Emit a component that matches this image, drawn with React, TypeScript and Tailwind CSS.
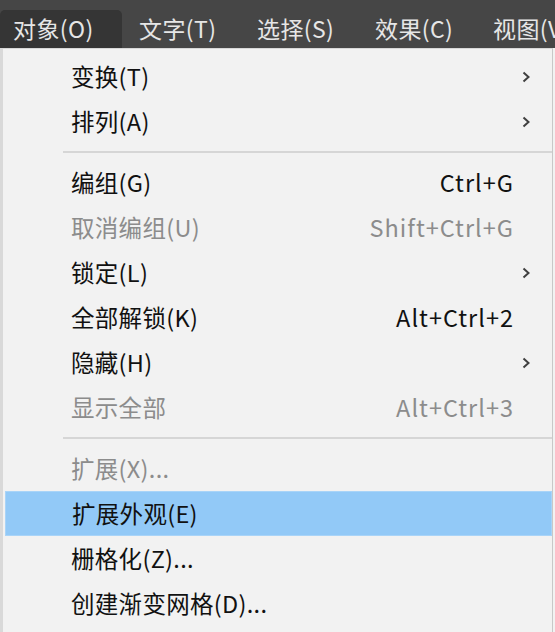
import React from 'react';

type Item =
  | { type: 'sep' }
  | { type: 'item'; label: string; shortcut?: string; sub?: boolean; disabled?: boolean; active?: boolean };

const items: Item[] = [
  { type: 'item', label: '变换(T)', sub: true },
  { type: 'item', label: '排列(A)', sub: true },
  { type: 'sep' },
  { type: 'item', label: '编组(G)', shortcut: 'Ctrl+G' },
  { type: 'item', label: '取消编组(U)', shortcut: 'Shift+Ctrl+G', disabled: true },
  { type: 'item', label: '锁定(L)', sub: true },
  { type: 'item', label: '全部解锁(K)', shortcut: 'Alt+Ctrl+2' },
  { type: 'item', label: '隐藏(H)', sub: true },
  { type: 'item', label: '显示全部', shortcut: 'Alt+Ctrl+3', disabled: true },
  { type: 'sep' },
  { type: 'item', label: '扩展(X)...', disabled: true },
  { type: 'item', label: '扩展外观(E)', active: true },
  { type: 'item', label: '栅格化(Z)...' },
  { type: 'item', label: '创建渐变网格(D)...' },
];

const menuBar = ['对象(O)', '文字(T)', '选择(S)', '效果(C)', '视图(V)'];

function Chevron() {
  return (
    <svg width="10" height="14" viewBox="0 0 10 14" className="text-[#404040]">
      <polyline points="2.5,2.5 7.5,7 2.5,11.5" fill="none" stroke="currentColor" strokeWidth="2" />
    </svg>
  );
}

export default function App() {
  return (
    <div
      className="w-[555px] h-[632px] overflow-hidden bg-[#f2f2f2]"
      style={{ fontFamily: '"Noto Sans CJK SC", "Noto Sans", sans-serif' }}
    >
      {/* menu bar */}
      <div className="h-[48px] bg-[#464646] flex items-end whitespace-nowrap overflow-hidden">
        {menuBar.map((m, i) => (
          <div
            key={m}
            className={
              i === 0
                ? 'h-[38px] w-[122px] shrink-0 rounded-t-[5px] bg-[#353535] pl-[13px] flex items-center text-[23px] tracking-[0.4px] text-[#e6e6e6] pb-[2px]'
                : 'h-[38px] w-[118px] shrink-0 pl-[17px] flex items-center text-[23px] tracking-[0.4px] text-[#e6e6e6] pb-[2px]'
            }
          >
            {m}
          </div>
        ))}
      </div>

      {/* dropdown */}
      <div className="h-[584px] border-t border-[#d8d8d8] border-l-[3px] border-l-[#d9d9d9] border-r border-r-[#c8c8c8] mr-[2px] pt-[5px] pl-[2px] bg-[#f2f2f2]">
        {items.map((it, i) =>
          it.type === 'sep' ? (
            <div key={i} className="h-[16px] flex items-center pl-[58px] first:h-[18px]">
              <div className="h-[2px] w-full bg-[#d6d6d6]" />
            </div>
          ) : (
            <div
              key={i}
              className={
                'h-[45px] flex items-center pl-[66px] pr-[20px] text-[23.5px] whitespace-nowrap ' +
                (it.active ? 'bg-[#92c9f7] border border-[#a9d4f8] ' : '') +
                (it.disabled ? 'text-[#8c8c8c]' : 'text-[#111111]')
              }
            >
              <span className="flex-1 tracking-[0.3px]">{it.label}</span>
              {it.shortcut && <span className="mr-[18px] tracking-[1px]">{it.shortcut}</span>}
              {it.sub && (
                <span className="w-[12px] flex justify-center">
                  <Chevron />
                </span>
              )}
            </div>
          )
        )}
      </div>
    </div>
  );
}
